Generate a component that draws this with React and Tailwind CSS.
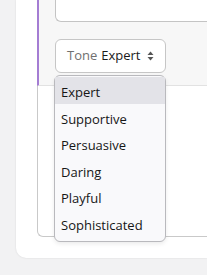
const tones = ["Expert", "Supportive", "Persuasive", "Daring", "Playful", "Sophisticated"];

const SortIcon = () => (
  <svg width="7" height="10" viewBox="0 0 7 10" className="text-[#555]">
    <path d="M3.5 0.5 L6.5 4 H0.5 Z" fill="currentColor" />
    <path d="M3.5 9.5 L6.5 6 H0.5 Z" fill="currentColor" />
  </svg>
);

const App = () => {
  return (
    <div
      className="relative w-[207px] h-[275px] overflow-hidden bg-[#f2f2f3] pl-[16px]"
      style={{ fontFamily: '"Open Sans", "Noto Sans", sans-serif' }}
    >
      <div className="h-[258px] bg-white rounded-bl-[10px] shadow-[0_0_2px_rgba(0,0,0,0.12)] pl-[21px]">
        <div className="h-[237px] border-l border-b border-[#c9c9c9] rounded-bl-[6px] bg-white">
          {/* Active section */}
          <div className="-ml-px h-[86px] border-l-2 border-[#a47dd3] border-b border-b-[#e2e2e2] bg-[#f7f7f7] pl-[16px]">
            <div className="h-[22px] bg-white border-l border-b border-[#c4c4c4] rounded-bl-[6px]" />
            <button
              type="button"
              className="mt-[17px] flex items-center w-[111px] h-[34px] px-[11px] bg-white border border-[#c6c6c6] rounded-[6px] text-[13px] text-[#1a1a1a]"
            >
              <span className="text-[#707070]">Tone</span>
              <span className="ml-[4px]">Expert</span>
              <span className="ml-auto">
                <SortIcon />
              </span>
            </button>
          </div>
        </div>
      </div>

      {/* Dropdown menu */}
      <div className="absolute left-[54px] top-[75px] w-[112px] h-[167px] bg-[#f9f9fb] border border-[#b9b9bd] rounded-[6px] shadow-[0_2px_4px_rgba(0,0,0,0.08)] py-[1px]">
        {tones.map((tone, i) => (
          <div
            key={tone}
            className={`h-[26.5px] flex items-center pt-[5px] px-[6px] text-[13px] text-[#161616] ${
              i === 0 ? "bg-[#e3e3e8]" : ""
            }`}
          >
            {tone}
          </div>
        ))}
      </div>
    </div>
  );
};

export default App;
